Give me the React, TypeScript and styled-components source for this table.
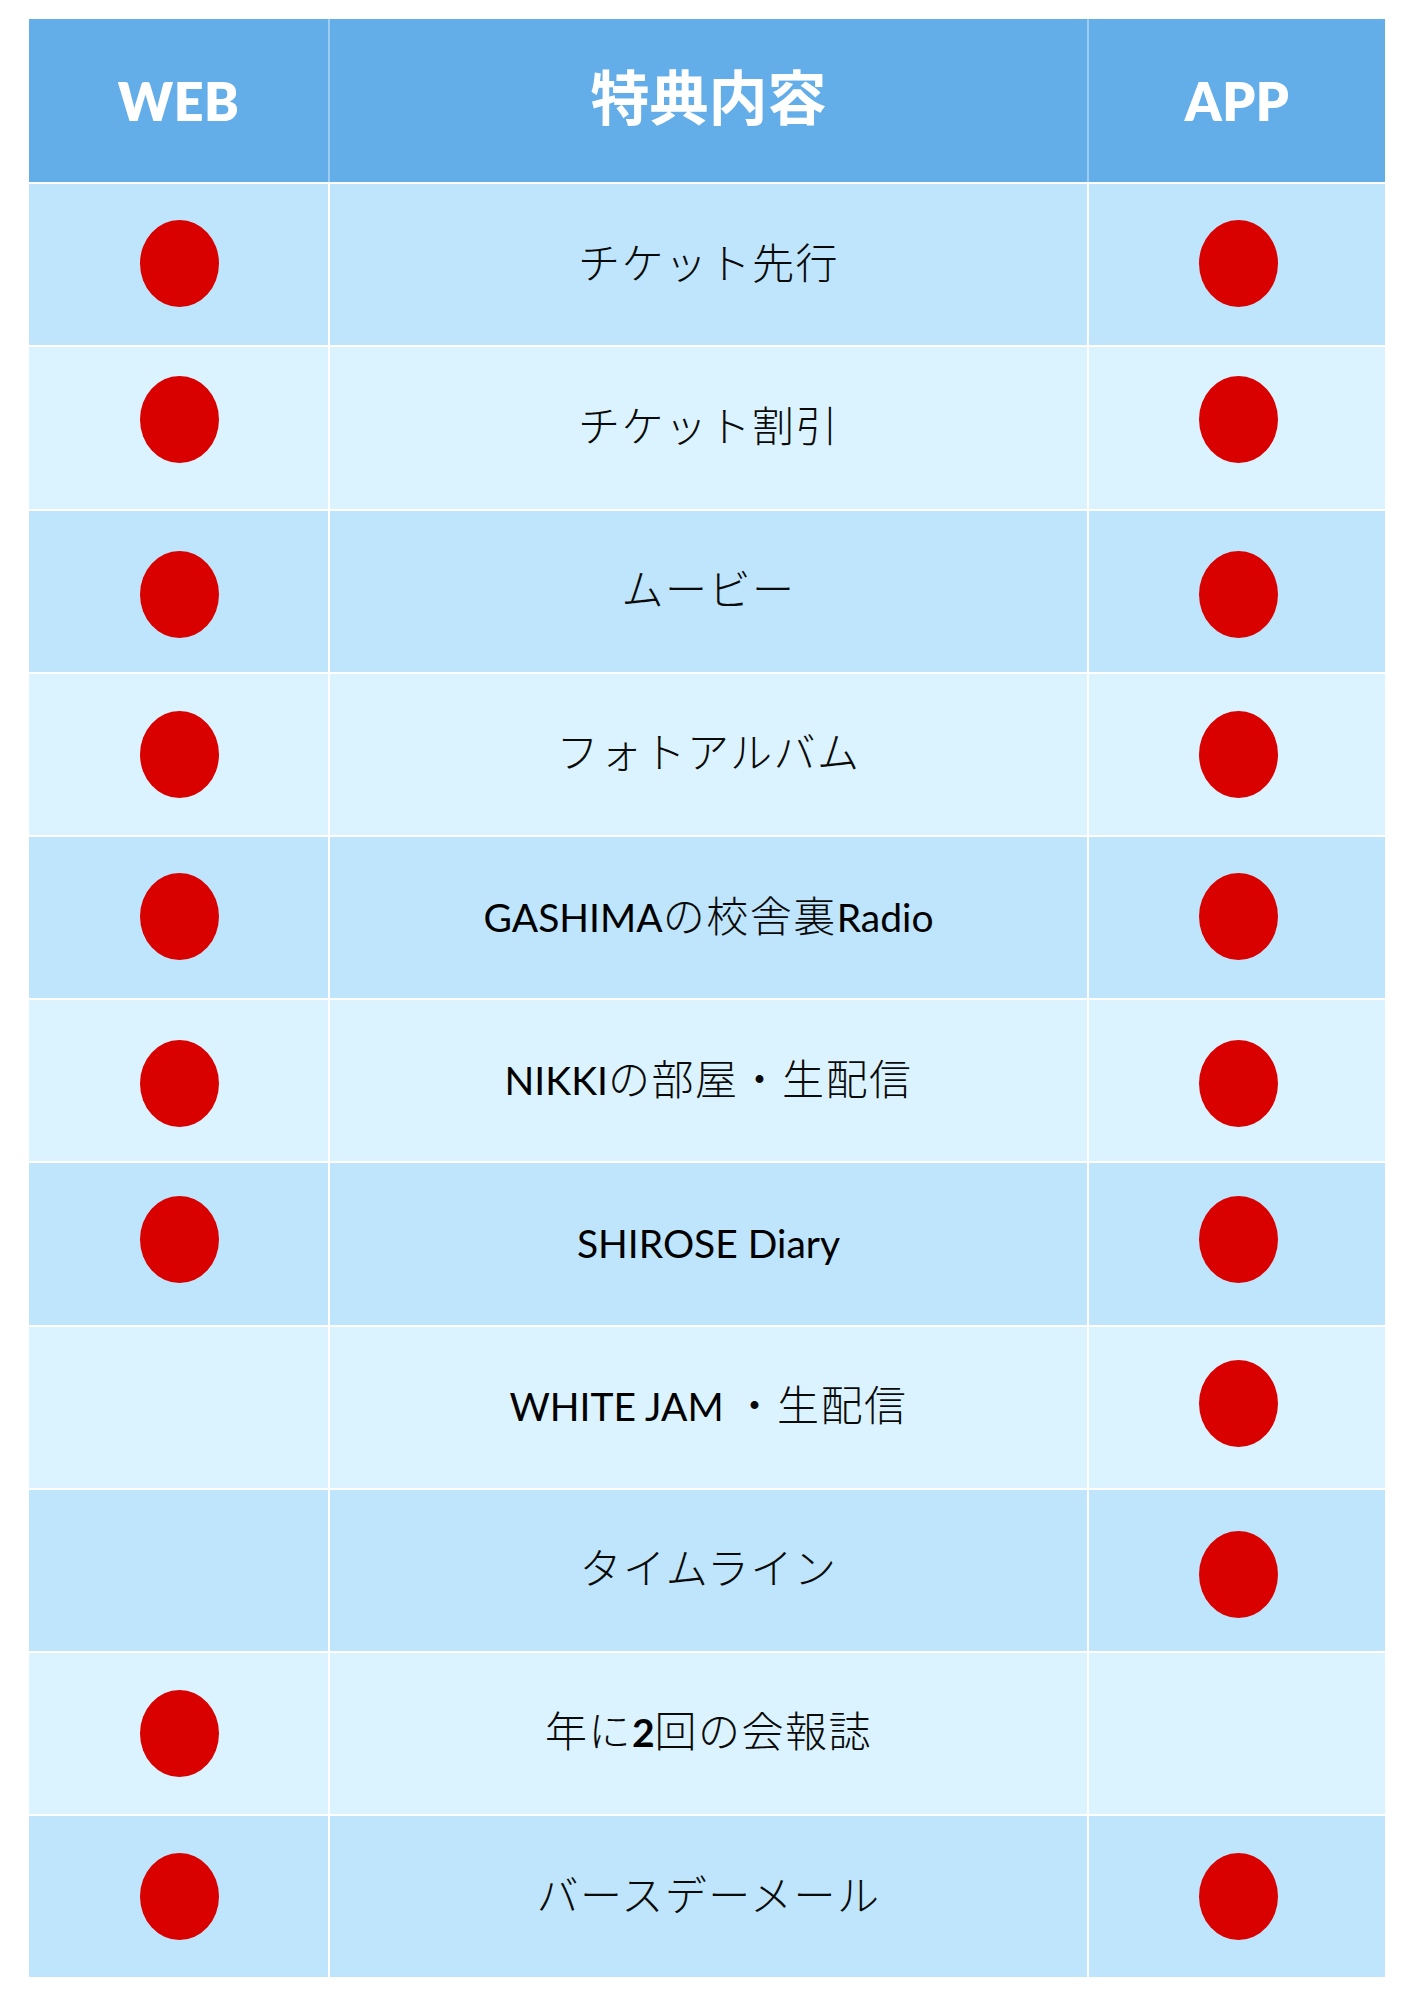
import React from 'react';
import styled, { createGlobalStyle } from 'styled-components';

const GlobalStyle = createGlobalStyle`
  html, body {
    margin: 0;
    padding: 0;
    background: #ffffff;
  }
`;

const Page = styled.div`
  width: 1414px;
  min-height: 2000px;
  padding: 19px 0 0 29px;
  box-sizing: border-box;
  background: #ffffff;
`;

const Table = styled.div`
  width: 1356px;
  display: grid;
  grid-template-columns: 301px 759px 296px;
  grid-auto-rows: 163.2px;
`;

const HeadCell = styled.div<{ $last?: boolean; $jp?: boolean }>`
  height: 163px;
  background: #63ade9;
  display: flex;
  align-items: center;
  justify-content: center;
  box-sizing: border-box;
  border-right: ${(p) => (p.$last ? 'none' : '2px solid rgba(255, 255, 255, 0.38)')};
  color: #ffffff;
  font-family: ${(p) => (p.$jp ? '"Noto Sans CJK JP", sans-serif' : 'Lato, "Noto Sans CJK JP", sans-serif')};
  font-weight: ${(p) => (p.$jp ? 700 : 800)};
  font-size: ${(p) => (p.$jp ? '59px' : '52px')};
  letter-spacing: ${(p) => (p.$jp ? '0' : '0.5px')};
  padding-bottom: ${(p) => (p.$jp ? '12px' : '0')};
`;

const Cell = styled.div<{ $shade: boolean; $last?: boolean }>`
  background: ${(p) => (p.$shade ? '#bee5fb' : '#dbf3fe')};
  display: flex;
  align-items: center;
  justify-content: center;
  box-sizing: border-box;
  border-top: 2px solid #ffffff;
  border-right: ${(p) => (p.$last ? 'none' : '2px solid #ffffff')};
`;

const Dot = styled.div<{ $dy: number }>`
  width: 79px;
  height: 87px;
  border-radius: 50%;
  background: #d90000;
  margin-left: 2px;
  transform: translateY(${(p) => p.$dy}px);
`;

const Label = styled.div`
  font-family: "Noto Sans CJK JP", sans-serif;
  font-weight: 300;
  font-size: 42px;
  color: #0a0a0a;
  white-space: nowrap;
  letter-spacing: 1.5px;
  margin-bottom: 9px;
`;

const Latin = styled.span<{ $bold?: boolean }>`
  font-family: Lato, "Noto Sans CJK JP", sans-serif;
  font-size: 39px;
  font-weight: ${(p) => (p.$bold ? 700 : 400)};
  letter-spacing: 0;
  color: #000000;
`;

type Perk = { label: React.ReactNode; web: boolean; app: boolean; dy: number };

const perks: Perk[] = [
  { label: 'チケット先行', web: true, app: true, dy: -1 },
  { label: 'チケット割引', web: true, app: true, dy: -8 },
  { label: 'ムービー', web: true, app: true, dy: 3 },
  { label: 'フォトアルバム', web: true, app: true, dy: 0 },
  { label: <><Latin>GASHIMA</Latin>の校舎裏<Latin>Radio</Latin></>, web: true, app: true, dy: -1 },
  { label: <><Latin>NIKKI</Latin>の部屋・生配信</>, web: true, app: true, dy: 3 },
  { label: <Latin>SHIROSE Diary</Latin>, web: true, app: true, dy: -4 },
  { label: <><Latin>WHITE JAM </Latin>・生配信</>, web: false, app: true, dy: -4 },
  { label: 'タイムライン', web: false, app: true, dy: 4 },
  { label: <>年に<Latin $bold>2</Latin>回の会報誌</>, web: true, app: false, dy: 0 },
  { label: 'バースデーメール', web: true, app: true, dy: 0 },
];

export default function App() {
  return (
    <>
      <GlobalStyle />
      <Page>
        <Table>
          <HeadCell>WEB</HeadCell>
          <HeadCell $jp>特典内容</HeadCell>
          <HeadCell $last>APP</HeadCell>
          {perks.map((p, i) => {
            const shade = i % 2 === 0;
            return (
              <React.Fragment key={i}>
                <Cell $shade={shade}>{p.web && <Dot $dy={p.dy} />}</Cell>
                <Cell $shade={shade}>
                  <Label>{p.label}</Label>
                </Cell>
                <Cell $shade={shade} $last>{p.app && <Dot $dy={p.dy} />}</Cell>
              </React.Fragment>
            );
          })}
        </Table>
      </Page>
    </>
  );
}
